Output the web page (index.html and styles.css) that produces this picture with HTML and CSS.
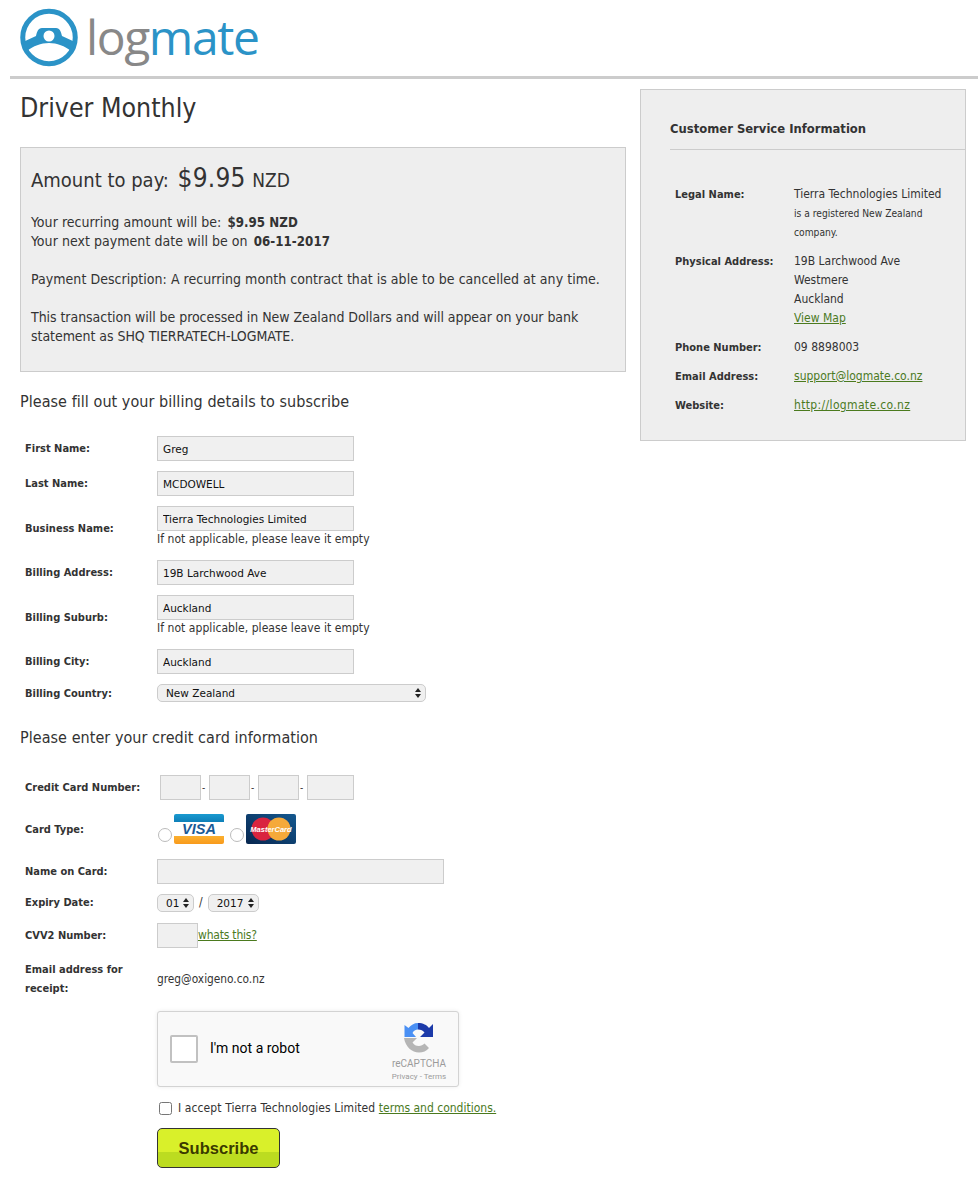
FILE: index.html
```html
<!DOCTYPE html>
<html lang="en">
<head>
    <meta charset="UTF-8">
    <title>Driver Monthly - Logmate</title>
    <link rel="stylesheet" href="styles.css">
</head>
<body>
    <header class="site-header">
        <svg class="logo-mark" width="60" height="60" viewBox="0 0 60 60">
            <circle cx="30" cy="29.5" r="26.25" fill="none" stroke="#2b93c7" stroke-width="5"/>
            <path d="M4 34 L17 28 C18 24 19 20 23 20 H37 C41 20 42 24 43 28 L56 34 L52 43 C46 38 38 35 30 35 C22 35 14 38 8 43 Z" fill="#2b93c7"/>
            <circle cx="30" cy="28" r="5.5" fill="#fff"/>
        </svg>
        <span class="logo-text">log<span class="logo-blue">mate</span></span>
    </header>

    <div class="page">
        <main class="main-col">
            <h1>Driver Monthly</h1>

            <section class="amount-box">
                <h2 class="amount">Amount to pay: <span class="amount-big">$9.95</span> <span class="amount-cur">NZD</span></h2>
                <p>Your recurring amount will be: <b>$9.95 NZD</b><br>Your next payment date will be on <b>06-11-2017</b></p>
                <p>Payment Description: A recurring month contract that is able to be cancelled at any time.</p>
                <p class="statement">This transaction will be processed in New Zealand Dollars and will appear on your bank statement as SHQ TIERRATECH-LOGMATE.</p>
            </section>

            <h3>Please fill out your billing details to subscribe</h3>

            <form class="form">
                <div class="row">
                    <label>First Name:</label>
                    <div class="field"><input class="text" type="text" value="Greg"></div>
                </div>
                <div class="row">
                    <label>Last Name:</label>
                    <div class="field"><input class="text" type="text" value="MCDOWELL"></div>
                </div>
                <div class="row">
                    <label>Business Name:</label>
                    <div class="field">
                        <input class="text" type="text" value="Tierra Technologies Limited">
                        <div class="note">If not applicable, please leave it empty</div>
                    </div>
                </div>
                <div class="row">
                    <label>Billing Address:</label>
                    <div class="field"><input class="text" type="text" value="19B Larchwood Ave"></div>
                </div>
                <div class="row">
                    <label>Billing Suburb:</label>
                    <div class="field">
                        <input class="text" type="text" value="Auckland">
                        <div class="note">If not applicable, please leave it empty</div>
                    </div>
                </div>
                <div class="row">
                    <label>Billing City:</label>
                    <div class="field"><input class="text" type="text" value="Auckland"></div>
                </div>
                <div class="row">
                    <label>Billing Country:</label>
                    <div class="field">
                        <span class="select-wrap country"><select><option>New Zealand</option></select></span>
                    </div>
                </div>

                <h3 class="card-title">Please enter your credit card information</h3>

                <div class="row row-cc">
                    <label>Credit Card Number:</label>
                    <div class="field cc-parts">
                        <input class="text cc" type="text"><span>-</span>
                        <input class="text cc" type="text"><span>-</span>
                        <input class="text cc" type="text"><span>-</span>
                        <input class="text cc-last" type="text">
                    </div>
                </div>
                <div class="row row-type">
                    <label>Card Type:</label>
                    <div class="field card-types">
                        <span class="radio"></span>
                        <svg width="50" height="30" viewBox="0 0 50 30">
                            <defs>
                                <linearGradient id="visaTop" x1="0" y1="0" x2="0" y2="1">
                                    <stop offset="0" stop-color="#1a9ad0"/>
                                    <stop offset="1" stop-color="#0e7fb8"/>
                                </linearGradient>
                                <linearGradient id="visaBottom" x1="0" y1="0" x2="0" y2="1">
                                    <stop offset="0" stop-color="#fbb030"/>
                                    <stop offset="1" stop-color="#f89a1c"/>
                                </linearGradient>
                                <linearGradient id="mcBack" x1="0" y1="1" x2="1" y2="0">
                                    <stop offset="0" stop-color="#07264f"/>
                                    <stop offset="1" stop-color="#14588f"/>
                                </linearGradient>
                            </defs>
                            <rect width="50" height="30" rx="2" fill="#fff"/>
                            <path d="M0 8 V2 Q0 0 2 0 H48 Q50 0 50 2 V8 Z" fill="url(#visaTop)"/>
                            <path d="M0 22 V28 Q0 30 2 30 H48 Q50 30 50 28 V22 Z" fill="url(#visaBottom)"/>
                            <text x="25" y="20" class="visa-text">VISA</text>
                        </svg>
                        <span class="radio"></span>
                        <svg width="50" height="30" viewBox="0 0 50 30">
                            <rect width="50" height="30" rx="2" fill="url(#mcBack)"/>
                            <circle cx="17" cy="15" r="11.5" fill="#d9243f"/>
                            <circle cx="33" cy="15" r="11.5" fill="#f5a93a"/>
                            <text x="25" y="18" class="mc-text">MasterCard</text>
                        </svg>
                    </div>
                </div>
                <div class="row">
                    <label>Name on Card:</label>
                    <div class="field"><input class="text wide" type="text"></div>
                </div>
                <div class="row row-expiry">
                    <label>Expiry Date:</label>
                    <div class="field expiry">
                        <span class="select-wrap month"><select><option>01</option></select></span>
                        <span>/</span>
                        <span class="select-wrap year"><select><option>2017</option></select></span>
                    </div>
                </div>
                <div class="row">
                    <label>CVV2 Number:</label>
                    <div class="field cvv"><input class="text cvv-input" type="text"><a href="#">whats this?</a></div>
                </div>
                <div class="row row-email">
                    <label>Email address for receipt:</label>
                    <div class="field email-value">greg@oxigeno.co.nz</div>
                </div>

                <div class="after">
                    <div class="captcha">
                        <span class="captcha-box"></span>
                        <span class="captcha-label">I'm not a robot</span>
                        <div class="captcha-brand">
                            <svg width="32" height="32" viewBox="0 0 32 32">
                                <path d="M15 1 C20 1 24 3 26 6 L30 2 V15 H17 L21.5 10.5 C20 8.5 18 7.5 15 7.5 Z" fill="#1c3aa9"/>
                                <path d="M15 1 V7.5 C12.5 7.5 10.5 9 9.5 11 L13 15 H1.5 V3 L5.5 6 C8 3 11 1 15 1 Z" fill="#4a90f4"/>
                                <path d="M1 16 H14 L9.5 20.5 C11 23 13 24 16 24 C18 24 20 23 21.5 21.5 L26 26 C23.5 29 20 30.5 16 30.5 C9 30.5 2.5 25 1 16 Z" fill="#b5b5b5"/>
                            </svg>
                            <div class="captcha-name">reCAPTCHA</div>
                            <div class="captcha-links">Privacy - Terms</div>
                        </div>
                    </div>
                    <div class="accept">
                        <input type="checkbox">
                        <span>I accept Tierra Technologies Limited <a href="#">terms and conditions.</a></span>
                    </div>
                    <button class="subscribe" type="button">Subscribe</button>
                </div>
            </form>
        </main>

        <aside class="service">
            <h4>Customer Service Information</h4>
            <dl>
                <dt>Legal Name:</dt>
                <dd>Tierra Technologies Limited<small>is a registered New Zealand company.</small></dd>
                <dt>Physical Address:</dt>
                <dd>19B Larchwood Ave<br>Westmere<br>Auckland<br><a href="#">View Map</a></dd>
                <dt>Phone Number:</dt>
                <dd>09 8898003</dd>
                <dt>Email Address:</dt>
                <dd><a href="#">support@logmate.co.nz</a></dd>
                <dt>Website:</dt>
                <dd><a class="site-link" href="#">http://logmate.co.nz</a></dd>
            </dl>
        </aside>
    </div>
</body>
</html>
```

FILE: styles.css
```css
body {
    margin: 0;
    font-family: "DejaVu Sans Condensed", "DejaVu Sans", sans-serif;
    font-size: 12px;
    line-height: 19px;
    color: #333;
    background: #fff;
}
a {
    color: #4b7a1e;
}
.site-header {
    margin-left: 10px;
    border-bottom: 3px solid #ccc;
    display: flex;
    align-items: flex-start;
    padding-left: 9px;
    padding-top: 8px;
    height: 68px;
}
.logo-mark {
    flex: none;
}
.logo-text {
    font-family: "Open Sans", sans-serif;
    font-size: 48px;
    font-weight: 500;
    line-height: 58px;
    color: #888;
    margin-left: 7px;
    letter-spacing: -1.4px;
}
.logo-blue {
    color: #2b93c7;
}
.page {
    display: flex;
    align-items: flex-start;
    padding-left: 20px;
    gap: 14px;
}
.main-col {
    width: 606px;
    flex: none;
}
.service {
    width: 326px;
    box-sizing: border-box;
    flex: none;
    margin-top: 10px;
    height: 352px;
    border: 1px solid #ccc;
    background: #eee;
    padding-top: 30px;
    padding-left: 29px;
}
h1 {
    font-size: 26.5px;
    font-weight: normal;
    line-height: 32px;
    margin: 13px 0 23px;
    color: #333;
}
.amount-box {
    border: 1px solid #ccc;
    background: #eee;
    height: 225px;
    box-sizing: border-box;
    padding: 12px 10px 0;
}
.amount {
    font-size: 20px;
    font-weight: normal;
    line-height: 36px;
    margin: 0 0 15px;
}
.amount-big {
    font-size: 26px;
    margin-left: 3px;
    letter-spacing: 0.2px;
}
.amount-cur {
    font-size: 19px;
    margin-left: 1px;
}
.amount-box p {
    font-size: 14px;
    letter-spacing: 0.04px;
    margin: 0 0 19px;
}
.amount-box b {
    font-size: 13.2px;
    margin-left: 2px;
}
.amount-box .statement {
    letter-spacing: -0.05px;
}
h3 {
    font-size: 16px;
    font-weight: normal;
    letter-spacing: 0.05px;
    line-height: 20px;
    margin: 20px 0 24px;
}
.row {
    display: flex;
    align-items: center;
    margin-bottom: 10px;
}
.row label {
    width: 132px;
    flex: none;
    margin-left: 5px;
    font-size: 11px;
    font-weight: bold;
    color: #333;
}
.text,
.cc-last {
    width: 197px;
    height: 25px;
    box-sizing: border-box;
    border: 1px solid #ccc;
    background: #f0f0f0;
    padding: 2px 5px;
    margin: 0;
    font-family: "DejaVu Sans", sans-serif;
    font-size: 10.5px;
    color: #111;
    display: block;
    border-radius: 0;
}
.text.wide {
    width: 287px;
}
.note {
    line-height: 17px;
    padding-bottom: 2px;
    letter-spacing: 0.05px;
}
.select-wrap {
    display: inline-block;
    position: relative;
    height: 18px;
}
.select-wrap select {
    appearance: none;
    width: 100%;
    height: 18px;
    border: 1px solid #ccc;
    border-radius: 5px;
    background: #f0f0f0;
    font-family: "DejaVu Sans", sans-serif;
    font-size: 10.5px;
    color: #111;
    padding: 0 8px;
    display: block;
}
.select-wrap::before,
.select-wrap::after {
    content: "";
    position: absolute;
    right: 5px;
    border-left: 3px solid transparent;
    border-right: 3px solid transparent;
}
.select-wrap::before {
    top: 4px;
    border-bottom: 4px solid #222;
}
.select-wrap::after {
    top: 10px;
    border-top: 4px solid #222;
}
.country {
    width: 269px;
}
.month {
    width: 37px;
}
.year {
    width: 51px;
}
.card-title {
    margin: 25px 0 27px;
}
.row-cc {
    margin-bottom: 14px;
}
.cc-parts {
    display: flex;
    align-items: center;
    margin-left: 3px;
}
.cc-parts span {
    width: 8px;
    font-size: 10px;
    padding-left: 1px;
    box-sizing: border-box;
}
.text.cc {
    width: 41px;
}
.cc-last {
    width: 47px;
}
.card-types {
    display: flex;
    align-items: flex-end;
}
.radio {
    width: 14px;
    height: 14px;
    border-radius: 50%;
    border: 1.5px solid #bbb;
    background: #fff;
    box-sizing: border-box;
    margin: 0 2px 2px 1px;
}
.card-types svg + .radio {
    margin-left: 6px;
}
.visa-text {
    font-family: "Liberation Sans", sans-serif;
    font-size: 14.5px;
    font-weight: bold;
    font-style: italic;
    fill: #1a5a96;
    text-anchor: middle;
}
.mc-text {
    font-family: "Liberation Sans", sans-serif;
    font-size: 7.5px;
    font-weight: bold;
    font-style: italic;
    fill: #fff;
    text-anchor: middle;
}
.row-type {
    margin-bottom: 15px;
}
.row-expiry {
    margin-top: -1px;
    margin-bottom: 11px;
}
.expiry {
    display: flex;
    align-items: center;
    gap: 5px;
}
.cvv {
    display: flex;
    align-items: center;
}
.cvv a {
    letter-spacing: -0.2px;
}
.text.cvv-input {
    width: 41px;
}
.row-email {
    margin-top: 12px;
    margin-bottom: 13px;
}
.row-email label {
    width: 127px;
    margin-right: 5px;
}
.email-value {
    font-size: 11.8px;
}
.after {
    margin-left: 137px;
}
.captcha {
    width: 302px;
    height: 76px;
    box-sizing: border-box;
    border: 1px solid #d3d3d3;
    border-radius: 3px;
    background: #f9f9f9;
    box-shadow: 0 0 4px rgba(0,0,0,0.08);
    display: flex;
    align-items: center;
    padding-left: 12px;
    font-family: Roboto, sans-serif;
}
.captcha-box {
    width: 28px;
    height: 28px;
    box-sizing: border-box;
    border: 2px solid #c1c1c1;
    border-radius: 2px;
    background: #fff;
    flex: none;
}
.captcha-label {
    margin-left: 12px;
    margin-bottom: 2px;
    font-size: 14px;
    color: #000;
}
.captcha-brand {
    margin-left: auto;
    margin-top: 8px;
    margin-right: 4px;
    width: 70px;
    text-align: center;
    color: #9b9b9b;
}
.captcha-brand svg {
    display: block;
    margin: 0 auto 3px;
}
.captcha-name {
    font-size: 10px;
    line-height: 13px;
}
.captcha-links {
    font-size: 8px;
    line-height: 14px;
}
.accept {
    display: flex;
    align-items: center;
    margin-top: 11px;
    height: 20px;
    letter-spacing: 0.1px;
}
.accept a {
    letter-spacing: 0;
}
.accept input {
    width: 13px;
    height: 13px;
    margin: 0 6px 0 2px;
}
.subscribe {
    display: block;
    width: 123px;
    height: 40px;
    margin-top: 10px;
    border: 1px solid #333;
    border-radius: 5px;
    background: linear-gradient(#d9f02a 60%, #bcdc20 60%);
    font-family: "Liberation Sans", sans-serif;
    font-size: 16.5px;
    font-weight: bold;
    color: #3a3a00;
    padding: 0;
}
.service h4 {
    font-size: 12.9px;
    line-height: 18px;
    margin: 0;
    padding-bottom: 11px;
    border-bottom: 1px solid #ccc;
    color: #333;
}
.service dl {
    display: grid;
    grid-template-columns: 119px 155px;
    margin: 35px 0 0 5px;
    row-gap: 10px;
}
.service dt {
    font-size: 11px;
    font-weight: bold;
}
.service dd {
    margin: 0;
}
.service small {
    display: block;
    font-size: 10.2px;
}
.site-link {
    letter-spacing: 0.35px;
}
```
